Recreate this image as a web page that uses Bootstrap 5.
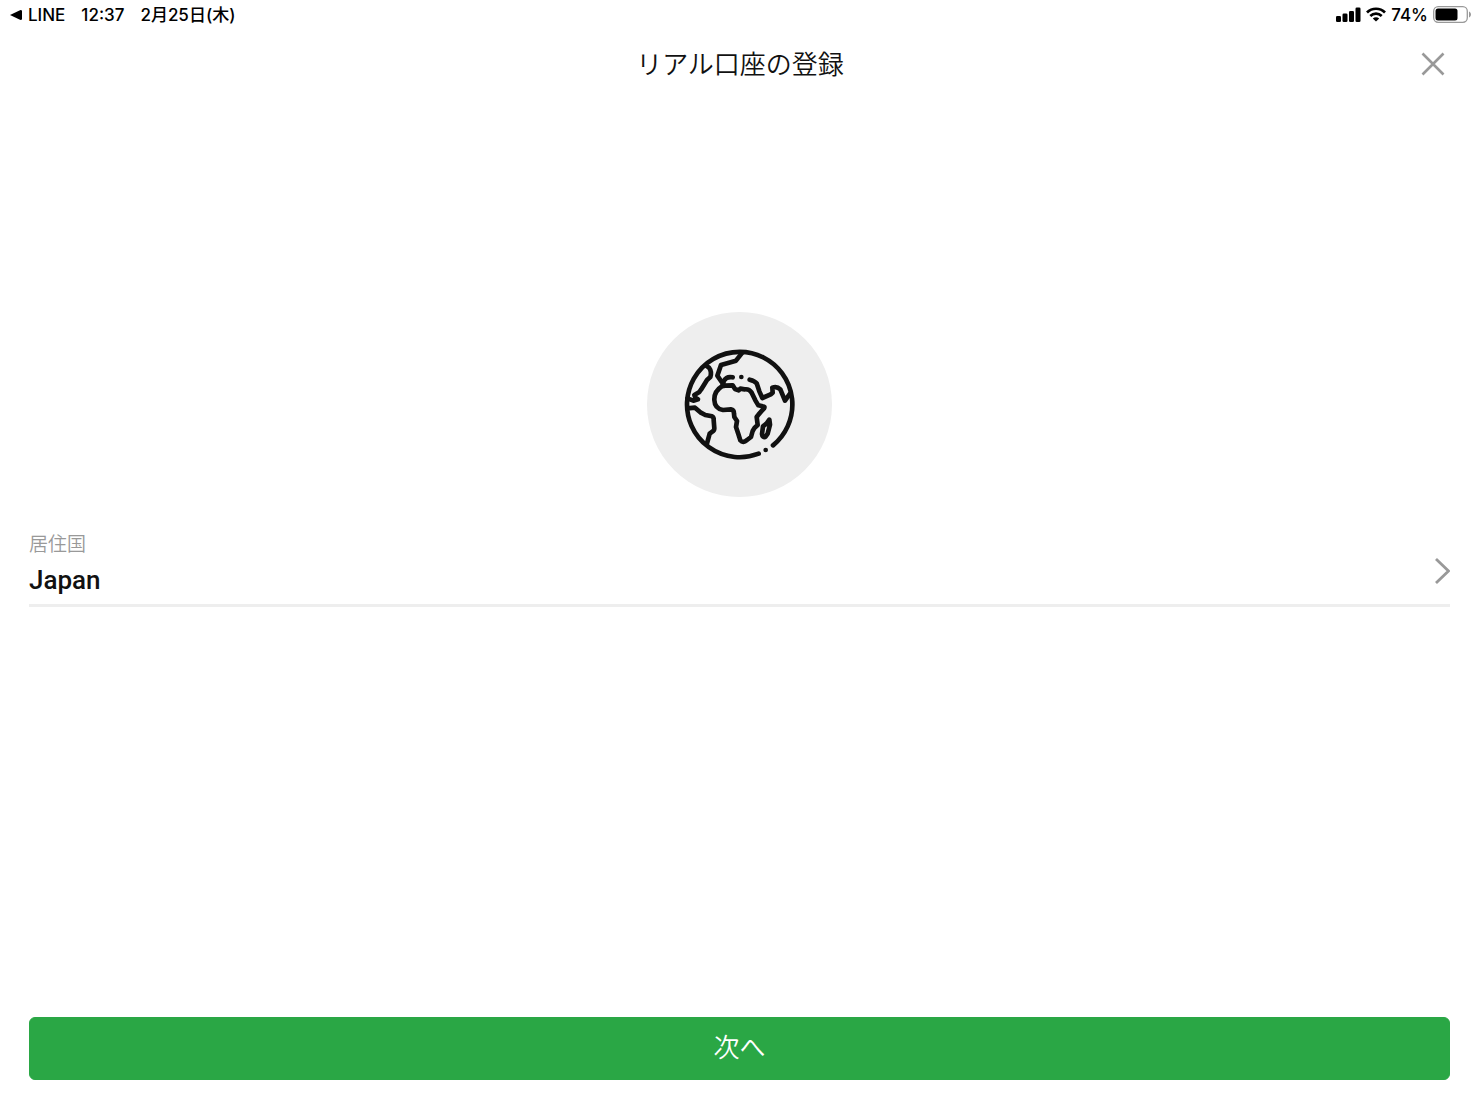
<!DOCTYPE html>
<html lang="ja">
<head>
<meta charset="utf-8">
<meta name="viewport" content="width=device-width, initial-scale=1">
<title>リアル口座の登録</title>
<link href="https://cdn.jsdelivr.net/npm/bootstrap@5.3.0/dist/css/bootstrap.min.css" rel="stylesheet">
<style>
  body { font-family: Roboto, "Noto Sans CJK JP", sans-serif; color: #111; background: #fff; }
  .status-bar { height: 29px; font-family: Inter, "Noto Sans CJK JP", sans-serif; padding: 0 8px 0 10px; font-size: 17px; line-height: 30px; font-weight: 500; color: #000; }
  .status-left { gap: 16px; }
  .status-right { gap: 5px; }
  .back-app { gap: 6px; color: #000; }
  .title-bar { height: 70px; padding: 0 28px 0 29px; }
  .title-text { font-size: 26px; line-height: 40px; font-weight: 350; padding-top: 2px; }
  .side-slot { width: 36px; }
  .plain-btn { border: 0; background: none; padding: 0; color: inherit; text-align: left; }
  .hero { padding-top: 213px; }
  .globe-disc { width: 185px; height: 185px; background: #eee; }
  .page-pad { padding-left: 29px; padding-right: 29px; }
  .country { margin-top: 34px; }
  .country-row { border-bottom: 3px solid #eee; height: 76px; }
  .country-label { font-size: 19px; line-height: 28px; font-weight: 350; color: #999; }
  .country-name { font-size: 26px; line-height: 32px; font-weight: 500; margin-top: 5px; }
  .row-arrow { margin-top: 26px; }
  .next-wrap { padding-bottom: 29px; }
  .next-btn { --bs-btn-bg: #2aa745; --bs-btn-border-color: #2aa745; --bs-btn-hover-bg: #238f3a; height: 63px; border-radius: 6px; font-size: 26px; line-height: 36px; font-weight: 350; padding: 4px 12px 6px; }
</style>
<script src="https://cdn.jsdelivr.net/npm/bootstrap@5.3.0/dist/js/bootstrap.bundle.min.js"></script>
</head>
<body class="min-vh-100 d-flex flex-column">
  <div class="status-bar d-flex justify-content-between align-items-center">
    <div class="status-left d-flex align-items-center">
      <a href="#" class="back-app d-flex align-items-center text-decoration-none">
        <svg width="12" height="10" viewBox="0 0 12 10" aria-hidden="true"><path d="M0 5 10.500 0Q12 0 12 1V9Q12 10 10.500 10Z"/></svg>
        <span>LINE</span>
      </a>
      <span>12:37</span>
      <span>2月25日(木)</span>
    </div>
    <div class="status-right d-flex align-items-center">
      <svg width="25" height="15" viewBox="0 0 25 15" aria-hidden="true"><rect x="0" y="9" width="5" height="6" rx="1.3"/><rect x="6.5" y="6.500" width="5" height="8.500" rx="1.300"/><rect x="13" y="4" width="5" height="11" rx="1.300"/><rect x="19.500" y="0.500" width="5" height="14.500" rx="1.300"/></svg>
      <svg width="20" height="15" viewBox="0 0 20 15" aria-hidden="true"><g fill="none" stroke="#000" stroke-width="2.700"><path d="M1 5.500C6 .5 14 .5 19 5.500"/><path d="M4.300 9C7.600 5.900 12.400 5.900 15.700 9"/></g><path d="M6.800 11.400C8.600 9.700 11.400 9.700 13.200 11.400L10 14.600Z"/></svg>
      <span>74%</span>
      <svg width="38" height="17" viewBox="0 0 38 17" aria-hidden="true"><rect x=".7" y=".7" width="33.600" height="15.600" rx="4.500" fill="none" stroke="#999" stroke-width="1.300"/><rect x="2.500" y="2.500" width="22" height="12" rx="2.500"/><path d="M36 5.500C38.600 6.500 38.600 10.500 36 11.500Z" fill="#999"/></svg>
    </div>
  </div>

  <header class="title-bar d-flex justify-content-between align-items-center">
    <div class="side-slot"></div>
    <h1 class="title-text mb-0">リアル口座の登録</h1>
    <button type="button" class="plain-btn side-slot d-flex justify-content-center" aria-label="閉じる">
      <svg width="24" height="24" viewBox="0 0 24 24" fill="none" stroke="#999" stroke-width="2.600"><path d="M1.500 1.500 22.500 22.500M22.500 1.500 1.500 22.500"/></svg>
    </button>
  </header>

  <main class="flex-grow-1 page-pad">
    <div class="hero d-flex justify-content-center">
      <div class="globe-disc rounded-circle d-flex justify-content-center align-items-center">
        <svg width="120" height="120" viewBox="0 0 360 360" fill="none" stroke="#111" stroke-width="14" stroke-linecap="round" stroke-linejoin="round" aria-hidden="true">
          <path d="M236 326A158 158 0 1 1 279 301"/>
          <path d="M77 61 87 68Q96 80 91 96L81 105 63 134 57 142 43 150 47 159 54 163 40 167 22 160"/>
          <path d="M22 190 45 188 61 202 76 210 96 214Q102 217 101 225L103 250Q103 257 97 260L89 266 80 299"/>
          <path d="M187 23 168 47 123 60 112 92 125 111"/>
          <path d="M158 97Q140 93 132 107L126 124Q102 139 103 165Q104 191 129 195L153 193Q162 194 162 206L163 216 171 228 168 246 175 267 181 286Q189 296 201 285L213 276 218 258 224 248 233 240 230 216 236 208 252 190Q256 184 248 184L235 181 226 166 215 143Q207 131 194 133L181 131 176 136 165 132 158 121 135 122 126 124"/>
          <path d="M209 104Q225 108 230 115L238 139 247 159 272 148 278 143 277 128Q291 123 301 133L315 167 330 146"/>
          <path d="M268 224 270 239 263 266 256 276Q247 278 246 267L249 244 260 235Z"/>
          <g fill="#111" stroke="none"><circle cx="184" cy="96" r="7"/><circle cx="257" cy="315" r="7"/></g>
        </svg>
      </div>
    </div>

    <div class="country">
      <button type="button" class="plain-btn country-row w-100 d-flex justify-content-between align-items-start" aria-labelledby="country-label country-name">
        <span class="d-flex flex-column">
          <span id="country-label" class="country-label">居住国</span>
          <span id="country-name" class="country-name">Japan</span>
        </span>
        <svg class="row-arrow" width="16" height="28" viewBox="0 0 16 28" fill="none" stroke="#999" stroke-width="2.800" aria-hidden="true"><path d="M2 2 14.500 14 2 26"/></svg>
      </button>
    </div>
  </main>

  <footer class="page-pad next-wrap">
    <button type="button" class="btn btn-success next-btn w-100">次へ</button>
  </footer>
</body>
</html>
